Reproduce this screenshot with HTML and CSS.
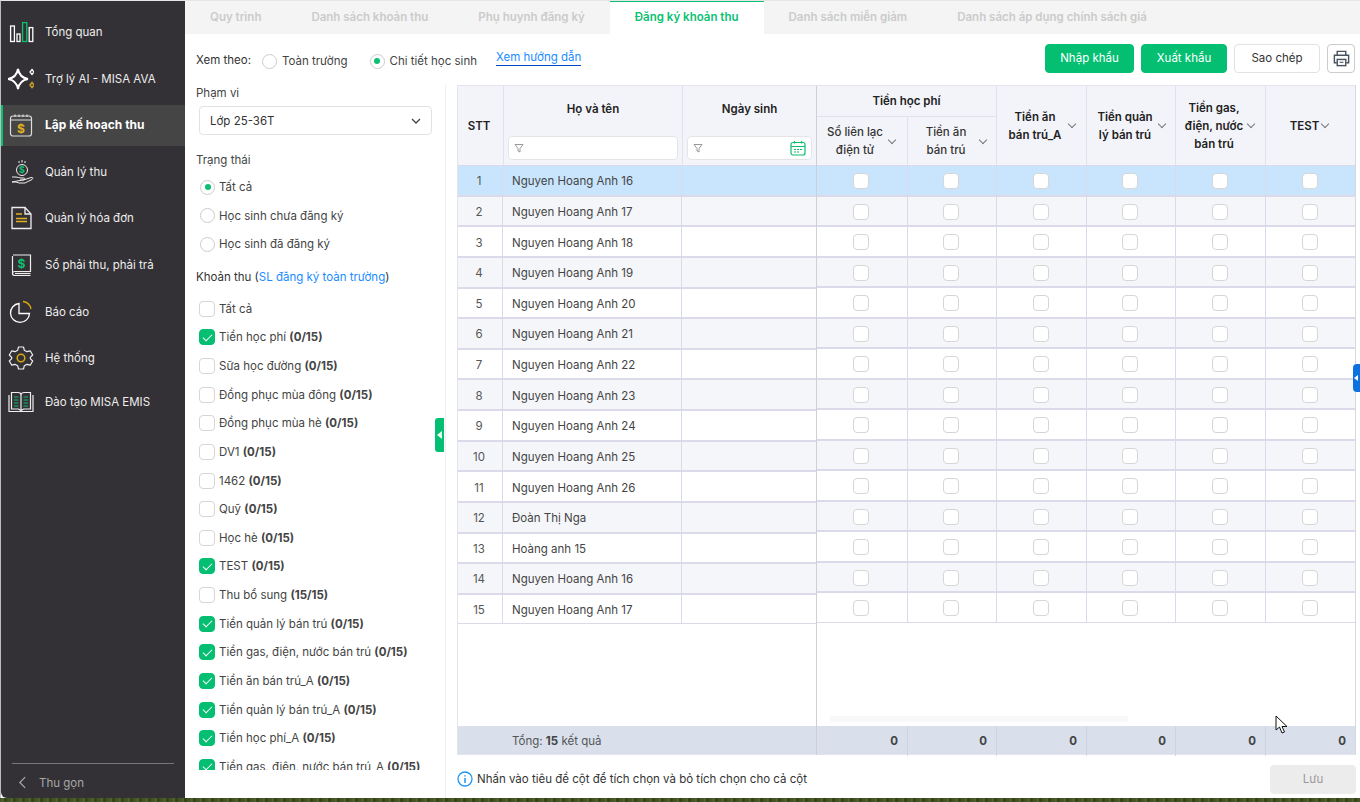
FILE: index.html
```html
<!DOCTYPE html>
<html lang="vi">
<head>
    <meta charset="UTF-8">
    <title>Đăng ký khoản thu</title>
    <link rel="stylesheet" href="styles.css">
</head>
<body>
<div class="app">
    <!-- Menu trái -->
    <aside class="sidebar">
        <nav class="menu">
            <a class="menu-item">
                <svg class="menu-icon" viewBox="0 0 26 26" fill="none" stroke="#fff" stroke-width="1.3"><rect x="2.6" y="7" width="3.8" height="15.5"/><rect x="9" y="15" width="3" height="7.5"/><rect x="14.6" y="3.6" width="4.2" height="18.9" stroke="#0fc070"/><rect x="21.2" y="8.6" width="3.6" height="13.9"/></svg>
                <span>Tổng quan</span>
            </a>
            <a class="menu-item">
                <svg class="menu-icon" viewBox="0 0 26 26" fill="none" stroke="#fff"><path d="M10 3C11 9 14 12 20 13C14 14 11 17 10 23C9 17 6 14 0 13C6 12 9 9 10 3Z" stroke-width="2"/><path d="M24 3.500L26 6L24 8.500L22 6Z" stroke-width="1.300"/><path d="M24 16.500L26 19L24 21.500L22 19Z" stroke="#c9a227" stroke-width="1.500"/></svg>
                <span>Trợ lý AI - MISA AVA</span>
            </a>
            <a class="menu-item active">
                <svg class="menu-icon" viewBox="0 0 26 26" fill="none" stroke="#ddd" stroke-width="1.200"><rect x="2.500" y="4" width="21" height="20" rx="2.500"/><path d="M2.500 8H23.500M7 2.500V5M11 2.500V5M15 2.500V5M19 2.500V5"/><text x="13" y="20.500" text-anchor="middle" class="icon-dollar gold">$</text></svg>
                <span>Lập kế hoạch thu</span>
            </a>
            <a class="menu-item">
                <svg class="menu-icon" viewBox="0 0 26 26" fill="none" stroke="#eee" stroke-width="1"><circle cx="14" cy="11" r="5.500"/><path d="M14 1V3.500M11 2V4M17 2V4"/><path d="M4 18H8C10 18 11 19 13 19H16C17 19 17 21 16 21H12M17 20.500L23 18.500C25 18 25.500 19.500 24 20.500L17 24H11L8 23H4Z"/><text x="14" y="14" text-anchor="middle" class="icon-dollar-sm green">$</text></svg>
                <span>Quản lý thu</span>
            </a>
            <a class="menu-item">
                <svg class="menu-icon" viewBox="0 0 26 26" fill="none" stroke="#eee" stroke-width="1.300"><path d="M4 2.500H17L23 9V23.500H4Z"/><path d="M17 2.500V9H23"/><path d="M8 9H14M8 13.500H19M8 16.500H19" stroke="#e0b020"/></svg>
                <span>Quản lý hóa đơn</span>
            </a>
            <a class="menu-item">
                <svg class="menu-icon" viewBox="0 0 26 26" fill="none" stroke="#eee" stroke-width="1.200"><path d="M5 3H22.500V19.500H7C5 19.500 4.500 20.500 4.500 21.500C4.500 23 5.500 23.500 7 23.500H22.500M4.500 21.500V4"/><path d="M7 21.500H22.500"/><text x="13.500" y="15.500" text-anchor="middle" class="icon-dollar green">$</text></svg>
                <span>Sổ phải thu, phải trả</span>
            </a>
            <a class="menu-item">
                <svg class="menu-icon" viewBox="0 0 26 26" fill="none" stroke="#fff" stroke-width="1.300"><path d="M11 4.500A9.500 9.500 0 1 0 21.500 14.500H11Z"/><path d="M15 2.500A9.500 9.500 0 0 1 23 10" stroke="#d8a810"/></svg>
                <span>Báo cáo</span>
            </a>
            <a class="menu-item">
                <svg class="menu-icon" viewBox="0 0 26 26" fill="none" stroke="#eee" stroke-width="1.200"><path d="M10.500 2H15.500L16.300 5.200L19 6.700L22.200 5.800L24.700 10L22.300 12.400V13.600L24.700 16L22.200 20.200L19 19.300L16.300 20.800L15.500 24H10.500L9.700 20.800L7 19.300L3.800 20.200L1.300 16L3.700 13.600V12.400L1.300 10L3.800 5.800L7 6.700L9.700 5.200Z" stroke-linejoin="round"/><circle cx="13" cy="13" r="3.800" stroke="#d8a810" stroke-width="1.500"/></svg>
                <span>Hệ thống</span>
            </a>
            <a class="menu-item last">
                <svg class="menu-icon" viewBox="0 0 26 26" fill="none" stroke="#eee" stroke-width="1.200"><path d="M1 6V22.500H25V6M3.500 3.500H10C11.500 3.500 13 4.500 13 6C13 4.500 14.500 3.500 16 3.500H22.500V20H15.500L13 21.500L10.500 20H3.500ZM13 6V21"/><path d="M6 8H10.500M6 11H10.500M6 14H10.500M6 17H10.500M15.500 8H20M15.500 11H20M15.500 14H20M15.500 17H20" stroke="#0fc070"/></svg>
                <span>Đào tạo MISA EMIS</span>
            </a>
        </nav>
        <div class="collapse">
            <svg class="collapse-icon" viewBox="0 0 10 14" fill="none" stroke="#aaa" stroke-width="1.300"><path d="M8 1L2 7L8 13"/></svg>
            <span>Thu gọn</span>
        </div>
    </aside>

    <main class="main">
        <!-- Tab -->
        <div class="tabs">
            <a class="tab">Quy trình</a>
            <a class="tab">Danh sách khoản thu</a>
            <a class="tab">Phụ huynh đăng ký</a>
            <a class="tab active">Đăng ký khoản thu</a>
            <a class="tab">Danh sách miễn giảm</a>
            <a class="tab">Danh sách áp dụng chính sách giá</a>
        </div>

        <div class="toolbar">
            <span class="view-label">Xem theo:</span>
            <label class="radio-line"><i class="radio"></i>Toàn trường</label>
            <label class="radio-line second"><i class="radio on"></i>Chi tiết học sinh</label>
            <a class="guide">Xem hướng dẫn</a>
            <div class="actions">
                <button class="btn green">Nhập khẩu</button>
                <button class="btn green">Xuất khẩu</button>
                <button class="btn">Sao chép</button>
                <button class="btn print">
                    <svg viewBox="0 0 20 20" fill="none" stroke="#4a5260" stroke-width="1.500"><path d="M5.500 6.500V2.500H14.500V6.500"/><path d="M5 14.500H2.500V6.500H17.500V14.500H15"/><rect x="5.500" y="11" width="9" height="6.500"/><path d="M8 14H12" stroke-width="1.200"/></svg>
                </button>
            </div>
        </div>

        <div class="content">
            <!-- Bộ lọc -->
            <section class="filter">
                <div class="field-label">Phạm vi</div>
                <div class="select">
                    <span>Lớp 25-36T</span>
                    <svg viewBox="0 0 10 6" fill="none" stroke="#444" stroke-width="1.300"><path d="M1 1L5 5L9 1"/></svg>
                </div>
                <div class="field-label status">Trạng thái</div>
                <div class="radio-list">
                    <label class="radio-item"><i class="radio on"></i>Tất cả</label>
                    <label class="radio-item"><i class="radio"></i>Học sinh chưa đăng ký</label>
                    <label class="radio-item"><i class="radio"></i>Học sinh đã đăng ký</label>
                </div>
                <div class="field-label fee">Khoản thu (<span class="blue">SL đăng ký toàn trường</span>)</div>
                <div class="fee-list">
                    <label class="fee-item"><i class="cb"></i>Tất cả</label>
                    <label class="fee-item"><i class="cb on"></i>Tiền học phí&nbsp;<b>(0/15)</b></label>
                    <label class="fee-item"><i class="cb"></i>Sữa học đường&nbsp;<b>(0/15)</b></label>
                    <label class="fee-item"><i class="cb"></i>Đồng phục mùa đông&nbsp;<b>(0/15)</b></label>
                    <label class="fee-item"><i class="cb"></i>Đồng phục mùa hè&nbsp;<b>(0/15)</b></label>
                    <label class="fee-item"><i class="cb"></i>DV1&nbsp;<b>(0/15)</b></label>
                    <label class="fee-item"><i class="cb"></i>1462&nbsp;<b>(0/15)</b></label>
                    <label class="fee-item"><i class="cb"></i>Quỹ&nbsp;<b>(0/15)</b></label>
                    <label class="fee-item"><i class="cb"></i>Học hè&nbsp;<b>(0/15)</b></label>
                    <label class="fee-item"><i class="cb on"></i>TEST&nbsp;<b>(0/15)</b></label>
                    <label class="fee-item"><i class="cb"></i>Thu bổ sung&nbsp;<b>(15/15)</b></label>
                    <label class="fee-item"><i class="cb on"></i>Tiền quản lý bán trú&nbsp;<b>(0/15)</b></label>
                    <label class="fee-item"><i class="cb on"></i>Tiền gas, điện, nước bán trú&nbsp;<b>(0/15)</b></label>
                    <label class="fee-item"><i class="cb on"></i>Tiền ăn bán trú_A&nbsp;<b>(0/15)</b></label>
                    <label class="fee-item"><i class="cb on"></i>Tiền quản lý bán trú_A&nbsp;<b>(0/15)</b></label>
                    <label class="fee-item"><i class="cb on"></i>Tiền học phí_A&nbsp;<b>(0/15)</b></label>
                    <label class="fee-item"><i class="cb on"></i>Tiền gas, điện, nước bán trú_A&nbsp;<b>(0/15)</b></label>
                </div>
                <div class="handle"></div>
            </section>

            <!-- Bảng -->
            <section class="panel">
                <div class="table">
                    <div class="pane frozen">
                        <div class="head">
                            <div class="th stt">STT</div>
                            <div class="th with-filter">
                                <span>Họ và tên</span>
                                <div class="filter-input">
                                    <svg class="funnel" viewBox="0 0 10 10" fill="none" stroke="#999"><path d="M1 1.500H9L6 5.500V9L4 8V5.500Z"/></svg>
                                </div>
                            </div>
                            <div class="th with-filter">
                                <span>Ngày sinh</span>
                                <div class="filter-input">
                                    <svg class="funnel" viewBox="0 0 10 10" fill="none" stroke="#999"><path d="M1 1.500H9L6 5.500V9L4 8V5.500Z"/></svg>
                                    <svg class="calendar" viewBox="0 0 16 16" fill="none" stroke="#0bbf73" stroke-width="1.200"><rect x="1" y="2.500" width="14" height="12.500" rx="2"/><path d="M1 6.500H15M4.500 1V3.500M11.500 1V3.500M4 9.500H6M7 9.500H9M10 9.500H12M4 12H6M7 12H9"/></svg>
                                </div>
                            </div>
                        </div>
                        <div class="rows">
                            <div class="row selected"><div class="td num">1</div><div class="td">Nguyen Hoang Anh 16</div><div class="td"></div></div>
                            <div class="row"><div class="td num">2</div><div class="td">Nguyen Hoang Anh 17</div><div class="td"></div></div>
                            <div class="row"><div class="td num">3</div><div class="td">Nguyen Hoang Anh 18</div><div class="td"></div></div>
                            <div class="row"><div class="td num">4</div><div class="td">Nguyen Hoang Anh 19</div><div class="td"></div></div>
                            <div class="row"><div class="td num">5</div><div class="td">Nguyen Hoang Anh 20</div><div class="td"></div></div>
                            <div class="row"><div class="td num">6</div><div class="td">Nguyen Hoang Anh 21</div><div class="td"></div></div>
                            <div class="row"><div class="td num">7</div><div class="td">Nguyen Hoang Anh 22</div><div class="td"></div></div>
                            <div class="row"><div class="td num">8</div><div class="td">Nguyen Hoang Anh 23</div><div class="td"></div></div>
                            <div class="row"><div class="td num">9</div><div class="td">Nguyen Hoang Anh 24</div><div class="td"></div></div>
                            <div class="row"><div class="td num">10</div><div class="td">Nguyen Hoang Anh 25</div><div class="td"></div></div>
                            <div class="row"><div class="td num">11</div><div class="td">Nguyen Hoang Anh 26</div><div class="td"></div></div>
                            <div class="row"><div class="td num">12</div><div class="td">Đoàn Thị Nga</div><div class="td"></div></div>
                            <div class="row"><div class="td num">13</div><div class="td">Hoàng anh 15</div><div class="td"></div></div>
                            <div class="row"><div class="td num">14</div><div class="td">Nguyen Hoang Anh 16</div><div class="td"></div></div>
                            <div class="row"><div class="td num">15</div><div class="td">Nguyen Hoang Anh 17</div><div class="td"></div></div>
                        </div>
                        <div class="foot">
                            <div class="total">Tổng: <b>15</b> kết quả</div>
                        </div>
                    </div>

                    <div class="pane scroll">
                        <div class="head">
                            <div class="th group">
                                <div class="group-title">Tiền học phí</div>
                                <div class="group-cols">
                                    <div class="th sub"><span>Sổ liên lạc<br>điện tử</span><i class="chev"></i></div>
                                    <div class="th sub"><span>Tiền ăn<br>bán trú</span><i class="chev"></i></div>
                                </div>
                            </div>
                            <div class="th"><span>Tiền ăn<br>bán trú_A</span><i class="chev"></i></div>
                            <div class="th"><span>Tiền quản<br>lý bán trú</span><i class="chev"></i></div>
                            <div class="th"><span>Tiền gas,<br>điện, nước<br>bán trú</span><i class="chev"></i></div>
                            <div class="th tight"><span>TEST</span><i class="chev"></i></div>
                        </div>
                        <div class="rows">
                            <div class="row selected"><div class="td"><i class="cb"></i></div><div class="td"><i class="cb"></i></div><div class="td"><i class="cb"></i></div><div class="td"><i class="cb"></i></div><div class="td"><i class="cb"></i></div><div class="td"><i class="cb"></i></div></div>
                            <div class="row"><div class="td"><i class="cb"></i></div><div class="td"><i class="cb"></i></div><div class="td"><i class="cb"></i></div><div class="td"><i class="cb"></i></div><div class="td"><i class="cb"></i></div><div class="td"><i class="cb"></i></div></div>
                            <div class="row"><div class="td"><i class="cb"></i></div><div class="td"><i class="cb"></i></div><div class="td"><i class="cb"></i></div><div class="td"><i class="cb"></i></div><div class="td"><i class="cb"></i></div><div class="td"><i class="cb"></i></div></div>
                            <div class="row"><div class="td"><i class="cb"></i></div><div class="td"><i class="cb"></i></div><div class="td"><i class="cb"></i></div><div class="td"><i class="cb"></i></div><div class="td"><i class="cb"></i></div><div class="td"><i class="cb"></i></div></div>
                            <div class="row"><div class="td"><i class="cb"></i></div><div class="td"><i class="cb"></i></div><div class="td"><i class="cb"></i></div><div class="td"><i class="cb"></i></div><div class="td"><i class="cb"></i></div><div class="td"><i class="cb"></i></div></div>
                            <div class="row"><div class="td"><i class="cb"></i></div><div class="td"><i class="cb"></i></div><div class="td"><i class="cb"></i></div><div class="td"><i class="cb"></i></div><div class="td"><i class="cb"></i></div><div class="td"><i class="cb"></i></div></div>
                            <div class="row"><div class="td"><i class="cb"></i></div><div class="td"><i class="cb"></i></div><div class="td"><i class="cb"></i></div><div class="td"><i class="cb"></i></div><div class="td"><i class="cb"></i></div><div class="td"><i class="cb"></i></div></div>
                            <div class="row"><div class="td"><i class="cb"></i></div><div class="td"><i class="cb"></i></div><div class="td"><i class="cb"></i></div><div class="td"><i class="cb"></i></div><div class="td"><i class="cb"></i></div><div class="td"><i class="cb"></i></div></div>
                            <div class="row"><div class="td"><i class="cb"></i></div><div class="td"><i class="cb"></i></div><div class="td"><i class="cb"></i></div><div class="td"><i class="cb"></i></div><div class="td"><i class="cb"></i></div><div class="td"><i class="cb"></i></div></div>
                            <div class="row"><div class="td"><i class="cb"></i></div><div class="td"><i class="cb"></i></div><div class="td"><i class="cb"></i></div><div class="td"><i class="cb"></i></div><div class="td"><i class="cb"></i></div><div class="td"><i class="cb"></i></div></div>
                            <div class="row"><div class="td"><i class="cb"></i></div><div class="td"><i class="cb"></i></div><div class="td"><i class="cb"></i></div><div class="td"><i class="cb"></i></div><div class="td"><i class="cb"></i></div><div class="td"><i class="cb"></i></div></div>
                            <div class="row"><div class="td"><i class="cb"></i></div><div class="td"><i class="cb"></i></div><div class="td"><i class="cb"></i></div><div class="td"><i class="cb"></i></div><div class="td"><i class="cb"></i></div><div class="td"><i class="cb"></i></div></div>
                            <div class="row"><div class="td"><i class="cb"></i></div><div class="td"><i class="cb"></i></div><div class="td"><i class="cb"></i></div><div class="td"><i class="cb"></i></div><div class="td"><i class="cb"></i></div><div class="td"><i class="cb"></i></div></div>
                            <div class="row"><div class="td"><i class="cb"></i></div><div class="td"><i class="cb"></i></div><div class="td"><i class="cb"></i></div><div class="td"><i class="cb"></i></div><div class="td"><i class="cb"></i></div><div class="td"><i class="cb"></i></div></div>
                            <div class="row"><div class="td"><i class="cb"></i></div><div class="td"><i class="cb"></i></div><div class="td"><i class="cb"></i></div><div class="td"><i class="cb"></i></div><div class="td"><i class="cb"></i></div><div class="td"><i class="cb"></i></div></div>
                        </div>
                        <div class="scrollbar"></div>
                        <div class="foot">
                            <div class="sum">0</div><div class="sum">0</div><div class="sum">0</div><div class="sum">0</div><div class="sum">0</div><div class="sum">0</div>
                        </div>
                    </div>
                </div>
                <div class="bottom">
                    <svg class="info" viewBox="0 0 16 16" fill="none" stroke="#2196f3" stroke-width="1.300"><circle cx="8" cy="8" r="7"/><path d="M8 7V12M8 4.200V5.600" stroke-width="1.500"/></svg>
                    <span>Nhấn vào tiêu đề cột để tích chọn và bỏ tích chọn cho cả cột</span>
                    <button class="btn save">Lưu</button>
                </div>
            </section>
        </div>
    </main>
</div>
<div class="side-tab"></div>
<svg class="cursor" viewBox="0 0 13 20"><path d="M1 1V15L4.500 12L7 18L9.500 17L7 11.500H12Z" fill="#fff" stroke="#111" stroke-width="1"/></svg>
</body>
</html>
```
FILE: styles.css
```css
* { box-sizing: border-box; }
html, body { height: 100%; }
body {
    margin: 0;
    height: 802px;
    overflow: hidden;
    position: relative;
    font-family: Inter, "Noto Sans", sans-serif;
    font-size: 11.5px;
    color: #444;
    background: repeating-linear-gradient(90deg, #3d4d20 0, #55662f 3px, #2f3d18 5px, #4a5a28 9px);
}
i { font-style: normal; display: block; }
button { font-family: inherit; }

.app {
    display: flex;
    height: 798px;
    border-top: 1px solid #e6e6e6;
    border-left: 1px solid #b9bdc2;
    background: #fff;
}

/* Menu trái */
.sidebar {
    width: 184px;
    flex: none;
    display: flex;
    flex-direction: column;
    background: #333135;
    border-bottom-left-radius: 6px;
    color: #eee;
}
.menu {
    flex: 1;
    display: flex;
    flex-direction: column;
    gap: 5.6px;
    padding-top: 10.500px;
}
.menu-item {
    height: 41px;
    display: flex;
    align-items: center;
    padding-left: 7px;
    gap: 11px;
}
.menu-item.active {
    background: #454545;
    border-left: 2px solid #0bbf73;
    padding-left: 5px;
    padding-bottom: 1px;
    font-size: 12px;
    font-weight: 700;
    color: #fff;
}
.menu-item.last { margin-top: -2.500px; }
.menu-icon { width: 26px; height: 26px; flex: none; }
.icon-dollar { font-size: 12px; font-weight: 700; stroke: none; }
.icon-dollar-sm { font-size: 9px; font-weight: 700; stroke: none; }
.gold { fill: #e0b020; }
.green { fill: #0fc070; }
.collapse {
    height: 35px;
    margin: 0 11px;
    padding: 3px 0 0 6px;
    display: flex;
    align-items: center;
    gap: 12px;
    border-top: 1px solid #77767a;
    color: #a8a8a8;
}
.collapse-icon { width: 9px; height: 13px; }

/* Tab */
.main { flex: 1; min-width: 0; display: flex; flex-direction: column; }
.tabs {
    display: flex;
    height: 33px;
    flex: none;
    background: #f4f4f4;
}
.tab {
    padding: 0 25px;
    line-height: 33px;
    font-weight: 600;
    color: #cbcbcb;
}
.tab.active {
    background: #fff;
    color: #0bbf73;
    border-top: 1px solid #0bbf73;
    line-height: 31px;
}

.toolbar {
    height: 51px;
    flex: none;
    display: flex;
    align-items: center;
    padding: 0 5px 0 11px;
}
.view-label { color: #333; width: 66px; margin-top: 1px; }
.radio-line { display: flex; align-items: center; gap: 5px; margin-top: 3px; }
.radio-line.second { margin-left: 22px; }
.radio {
    width: 15px;
    height: 15px;
    flex: none;
    border: 1px solid #ccc;
    border-radius: 50%;
    background: #fff;
    position: relative;
}
.radio.on::after {
    content: "";
    position: absolute;
    left: 3.500px;
    top: 3.500px;
    width: 6px;
    height: 6px;
    border-radius: 50%;
    background: #0bbf73;
}
.guide {
    margin: -4px 0 0 19px;
    color: #1a8cff;
    border-bottom: 1px solid #0048c8;
    line-height: 15px;
}
.actions { margin-left: auto; display: flex; align-items: center; margin-top: -3px; }
.btn {
    height: 29px;
    border: 1px solid #e2e2e2;
    border-radius: 4px;
    background: #fff;
    color: #333;
    font-size: 11.5px;
    padding: 0;
    width: 86px;
    margin-left: 7px;
}
.btn.green {
    background: #04bf72;
    border-color: #04bf72;
    color: #fff;
}
.btn.green:first-child { width: 89px; margin-left: 0; }
.btn.print {
    width: 28px;
    border-color: #ccc;
    display: flex;
    align-items: center;
    justify-content: center;
}
.btn.print svg { width: 19px; height: 19px; }

.content { flex: 1; min-height: 0; display: flex; }

/* Bộ lọc */
.filter {
    width: 261px;
    flex: none;
    position: relative;
    padding-left: 11px;
    border-right: 1px solid #f0f0f0;
}
.field-label { line-height: 16px; color: #444; }
.select {
    width: 233px;
    height: 29px;
    margin: 5px 0 0 3px;
    padding: 0 10px;
    display: flex;
    align-items: center;
    justify-content: space-between;
    border: 1px solid #e2e2e2;
    border-radius: 4px;
    color: #333;
}
.select svg { width: 10px; height: 6px; }
.field-label.status { margin-top: 17px; }
.radio-list { margin-top: 5px; }
.radio-item {
    height: 28.500px;
    display: flex;
    align-items: center;
    gap: 4px;
    padding-left: 4px;
}
.field-label.fee { margin-top: 10px; color: #333; }
.blue { color: #1a8cff; }
.fee-list {
    margin-top: 10px;
    height: 475px;
    overflow: hidden;
}
.fee-item {
    height: 28.640px;
    display: flex;
    align-items: center;
    padding-left: 3px;
    white-space: nowrap;
}
.fee-item .cb { margin-right: 4px; }
.fee-item b { color: #444; font-weight: 700; }
.cb {
    width: 16px;
    height: 16px;
    flex: none;
    border: 1px solid #d6d6d6;
    border-radius: 4px;
    background: #fff;
    position: relative;
}
.cb.on { background: #04bf72; border-color: #04bf72; }
.cb.on::after {
    content: "";
    position: absolute;
    left: 3px;
    top: 3.500px;
    width: 8px;
    height: 4px;
    border-left: 1.500px solid #fff;
    border-bottom: 1.500px solid #fff;
    transform: rotate(-45deg);
}
.handle {
    position: absolute;
    left: 250px;
    top: 333px;
    width: 9px;
    height: 34px;
    background: #04bf72;
    border-radius: 3px 0 0 3px;
}
.handle::after {
    content: "";
    position: absolute;
    left: 2px;
    top: 12.500px;
    border: 4.500px solid transparent;
    border-left-width: 0;
    border-right: 5px solid #e8fff4;
}

/* Bảng */
.panel {
    flex: 1;
    min-width: 0;
    display: flex;
    flex-direction: column;
    padding: 0 4px 0 11px;
}
.table {
    flex: none;
    height: 670px;
    display: flex;
    border-left: 1px solid #e4e4ee;
    border-right: 1px solid #d8d8e0;
    border-top: 1px solid #e4e4ee;
}
.pane { display: flex; flex-direction: column; position: relative; }
.frozen { width: 359px; flex: none; border-right: 1px solid #cfcfd6; }
.scroll { flex: 1; min-width: 0; }
.head {
    height: 79px;
    flex: none;
    display: grid;
    background: #f3f4f9;
}
/* hàng tiêu đề lệch 1px so với hàng dữ liệu */
.frozen .head { grid-template-columns: 46px 179px 133px; }
.frozen .row { grid-template-columns: 45px 179px 134px; }
.scroll .head { grid-template-columns: 180px 90px 89px 90px 89px; }
.scroll .row, .scroll .foot { grid-template-columns: 91px 89px 90px 89px 90px 89px; }
.th {
    display: flex;
    align-items: center;
    justify-content: center;
    text-align: center;
    line-height: 18px;
    font-weight: 600;
    color: #222;
    border-right: 1px solid #e2e2ec;
}
.th:last-child { border-right: 0; }
.th.stt { padding-right: 3px; }
.scroll .th { justify-content: flex-start; padding-left: 7px; }
.scroll .th > span { width: 62px; flex: none; }
.scroll .th .chev { margin-left: 3px; }
.scroll .th.tight { justify-content: center; padding-left: 0; padding-right: 3px; }
.scroll .th.tight > span { width: auto; }
.chev {
    width: 6px;
    height: 6px;
    flex: none;
    margin-top: -3px;
    border-right: 1px solid #777;
    border-bottom: 1px solid #777;
    transform: rotate(45deg);
}
.with-filter {
    flex-direction: column;
    justify-content: flex-start;
    padding: 14px 4px 0;
}
.filter-input {
    width: 100%;
    height: 24px;
    margin-top: 18px;
    padding: 0 5px;
    display: flex;
    align-items: center;
    justify-content: space-between;
    background: #fff;
    border: 1px solid #e4e4e8;
    border-radius: 4px;
}
.funnel { width: 10px; height: 10px; }
.calendar { width: 16px; height: 16px; }
.scroll .th.group {
    flex-direction: column;
    align-items: stretch;
    justify-content: flex-start;
    padding-left: 0;
}
.group-title { height: 31px; line-height: 30px; border-bottom: 1px solid #e2e2ec; }
.group-cols { flex: 1; display: grid; grid-template-columns: 91px 89px; }
.scroll .th.sub { font-weight: 500; color: #333; }

.rows { flex: 1; min-height: 0; }
.row {
    display: grid;
    border-top: 1px solid #dadaea;
    border-bottom: 1px solid #dadaea;
    background: #fff;
}
.frozen .row { height: 30.640px; }
.scroll .row { height: 30.500px; }
.row:nth-child(even) { background: #f5f6fa; }
.row.selected { background: #c9e5fd; }
.td {
    display: flex;
    align-items: center;
    justify-content: center;
    padding-top: 2px;
    border-right: 1px solid #dadaea;
    color: #444;
    min-width: 0;
}
.td:last-child { border-right: 0; }
.scroll .td { padding-right: 2px; }
.frozen .td:nth-child(2) { justify-content: flex-start; padding-left: 9px; }
.frozen .td.num { color: #555; padding-right: 2px; }
.scrollbar {
    position: absolute;
    left: 13px;
    bottom: 33px;
    width: 298px;
    height: 6px;
    background: #f8f8f8;
}
.foot {
    height: 29px;
    flex: none;
    background: #d9e0ec;
    border-bottom: 1px solid #e4e4ee;
}
.scroll .foot { display: grid; }
.total { padding-left: 54px; line-height: 30px; color: #555; }
.total b { color: #444; }
.sum {
    padding-right: 9px;
    text-align: right;
    line-height: 30px;
    font-weight: 700;
    color: #444;
    border-right: 1px solid #ced5e2;
}
.sum:last-child { border-right: 0; }

.bottom {
    flex: 1;
    display: flex;
    align-items: center;
    gap: 4px;
    color: #333;
    padding-top: 5px;
}
.info { width: 16px; height: 16px; }
.btn.save {
    margin-left: auto;
    width: 86px;
    background: #ececec;
    border-color: #ececec;
    color: #999;
}

.side-tab {
    position: absolute;
    right: 0;
    top: 364px;
    width: 7px;
    height: 28px;
    background: #0b72e0;
    border-radius: 4px 0 0 4px;
}
.side-tab::after {
    content: "";
    position: absolute;
    left: 1px;
    top: 11px;
    border: 3px solid transparent;
    border-left-width: 0;
    border-right: 4px solid #fff;
}
.cursor {
    position: absolute;
    left: 1275px;
    top: 715px;
    width: 13px;
    height: 20px;
}
```
